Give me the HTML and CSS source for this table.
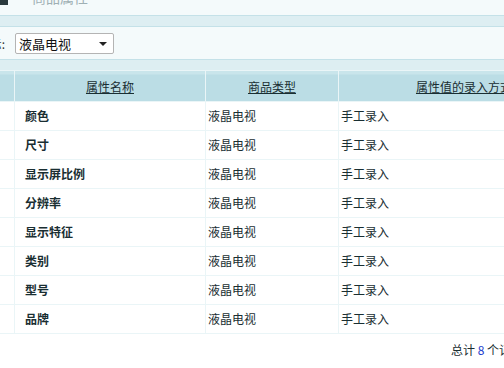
FILE: index.html
```html
<!DOCTYPE html>
<html>
<head>
<meta charset="utf-8">
<link rel="stylesheet" href="styles.css">
</head>
<body>
<div class="page">
  <div class="title">
    <span class="logo"></span>
    <h1 class="title-text">- 商品属性</h1>
  </div>
  <div class="form-div">
    <span class="label">按商品类型显示:</span>
    <span class="select">
      <span class="select-text">液晶电视</span>
      <svg class="arrow" width="8" height="4" viewBox="0 0 8 4"><path d="M0 0H8L4 4Z" fill="#222"/></svg>
    </span>
  </div>
  <div class="list-div">
    <table class="list">
      <colgroup>
        <col class="c1"><col class="c2"><col class="c3"><col class="c4">
      </colgroup>
      <thead>
        <tr><th></th><th><a>属性名称</a></th><th><a>商品类型</a></th><th><a>属性值的录入方式</a></th></tr>
      </thead>
      <tbody>
        <tr><td></td><td class="name">颜色</td><td>液晶电视</td><td>手工录入</td></tr>
        <tr><td></td><td class="name">尺寸</td><td>液晶电视</td><td>手工录入</td></tr>
        <tr><td></td><td class="name">显示屏比例</td><td>液晶电视</td><td>手工录入</td></tr>
        <tr><td></td><td class="name">分辨率</td><td>液晶电视</td><td>手工录入</td></tr>
        <tr><td></td><td class="name">显示特征</td><td>液晶电视</td><td>手工录入</td></tr>
        <tr><td></td><td class="name">类别</td><td>液晶电视</td><td>手工录入</td></tr>
        <tr><td></td><td class="name">型号</td><td>液晶电视</td><td>手工录入</td></tr>
        <tr><td></td><td class="name">品牌</td><td>液晶电视</td><td>手工录入</td></tr>
      </tbody>
    </table>
    <div class="pager">总计 <span class="num">8</span> 个记录分为 <span class="num">1</span> 页当前第 <span class="num">1</span> 页</div>
  </div>
</div>
</body>
</html>
```
FILE: styles.css
```css
html, body {
  margin: 0;
  padding: 0;
  width: 504px;
  height: 368px;
  overflow: hidden;
  background: #ddeef2;
  font-family: "Noto Sans CJK SC", "Noto Sans", sans-serif;
  font-size: 12px;
  color: #192e32;
}
.page {
  width: 504px;
}
.title {
  height: 15px;
  background: #f4fafb;
  border-bottom: 1px solid #c4e1e8;
  overflow: hidden;
  display: flex;
  align-items: flex-end;
  gap: 16px;
}
.logo {
  width: 8px;
  height: 5px;
  background: #2a3a3e;
  align-self: flex-start;
}
.title-text {
  margin: 0 0 11px 0;
  font-size: 14px;
  line-height: 14px;
  font-weight: normal;
  color: #9fb0b4;
}
.form-div {
  margin-top: 10px;
  border-top: 1px solid #c4e1e8;
  border-bottom: 1px solid #c4e1e8;
  background: #f4fafb;
  display: flex;
  align-items: center;
  padding-top: 1px;
  box-sizing: border-box;
  height: 34px;
}
.label {
  width: 100px;
  margin-left: -95px;
  text-align: right;
  white-space: nowrap;
  color: #333;
  margin-right: 10px;
}
.select {
  width: 99px;
  height: 21px;
  box-sizing: border-box;
  border: 1px solid #b4b4b4;
  border-radius: 2px;
  background: #fff;
  display: flex;
  align-items: center;
  justify-content: space-between;
  padding: 0 6px 0 3px;
}
.select-text {
  font-size: 13px;
  color: #111;
}
.list-div {
  margin-top: 10px;
  background: #fff;
}
.list {
  border-collapse: separate;
  border-spacing: 1px;
  background: #eaf5f7;
  margin-left: -20px;
  width: 610px;
  table-layout: fixed;
}
.c1 { width: 33px; }
.c2 { width: 190px; }
.c3 { width: 132px; }
.c4 { width: 250px; }
.list th {
  height: 30px;
  padding: 0;
  background: linear-gradient(#c9e5eb 0, #c9e5eb 3px, #bbdde5 4px, #bbdde5 100%);
  font-weight: normal;
  text-align: center;
  white-space: nowrap;
  overflow: hidden;
}
.list th a {
  text-decoration: underline;
  color: #192e32;
}
.list td {
  height: 26px;
  padding: 0 0 2px 2px;
  background: #fff;
  white-space: nowrap;
  color: #192e32;
}
.list td.name {
  padding-left: 10px;
  font-weight: bold;
}
.pager {
  padding: 7px 0 0 451px;
  line-height: 18px;
  white-space: nowrap;
  background: #fff;
  height: 40px;
}
.num {
  color: #1a3ccc;
}
```
